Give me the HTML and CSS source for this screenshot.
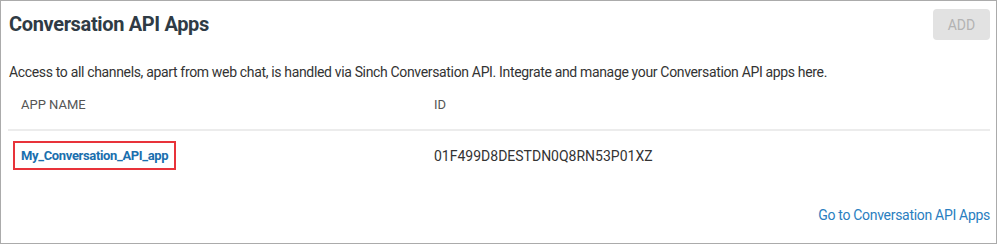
FILE: index.html
```html
<!DOCTYPE html>
<html lang="en">
<head>
    <meta charset="UTF-8">
    <title>Conversation API Apps</title>
    <link rel="stylesheet" href="styles.css">
</head>
<body>
    <div class="panel">
        <div class="panel-head">
            <h2>Conversation API Apps</h2>
            <button class="btn-add" disabled>ADD</button>
        </div>
        <p class="intro">Access to all channels, apart from web chat, is handled via Sinch Conversation API. Integrate and manage your Conversation API apps here.</p>
        <table class="apps">
            <thead>
                <tr>
                    <th class="col-name">APP NAME</th>
                    <th>ID</th>
                </tr>
            </thead>
            <tbody>
                <tr>
                    <td class="col-name"><a href="#" class="app-link">My_Conversation_API_app</a></td>
                    <td>01F499D8DESTDN0Q8RN53P01XZ</td>
                </tr>
            </tbody>
        </table>
        <div class="panel-foot">
            <a href="#">Go to Conversation API Apps</a>
        </div>
    </div>
</body>
</html>
```

FILE: styles.css
```css
body {
    margin: 0;
    font-family: Roboto, sans-serif;
    color: #333;
    background: #fff;
}
.panel {
    width: 995px;
    height: 242px;
    border: 1px solid #ababab;
}
.panel-head {
    display: flex;
    justify-content: space-between;
    align-items: flex-start;
    padding: 8px 6px 0 8px;
}
.panel-head h2 {
    margin: 3px 0 0;
    font-size: 20px;
    font-weight: 700;
    letter-spacing: -0.35px;
    color: #2f3b45;
}
.btn-add {
    width: 57px;
    height: 31px;
    border: none;
    border-radius: 4px;
    background: #e2e2e2;
    color: #b3b3b3;
    font-family: Roboto, sans-serif;
    font-size: 14px;
}
.intro {
    margin: 24px 0 0 8px;
    font-size: 14px;
    letter-spacing: -0.34px;
    color: #333;
}
.apps {
    width: 982px;
    margin: 6px 0 0 7px;
    border-collapse: collapse;
}
.apps th {
    text-align: left;
    font-weight: 400;
    font-size: 13px;
    color: #555;
    padding: 11px 0 17px;
    border-bottom: 2px solid #ececec;
}
.apps td {
    font-size: 14px;
    padding: 10px 0 9px;
}
.col-name {
    width: 413px;
    padding-left: 13px !important;
}
.app-link {
    display: inline-block;
    color: #1a6fae;
    font-weight: 700;
    font-size: 13px;
    letter-spacing: -0.35px;
    text-decoration: none;
    padding: 5px 6px;
    margin-left: -8px;
    border: 2px solid #e8333a;
}
.panel-foot {
    text-align: right;
    padding: 26px 6px 0 0;
}
.panel-foot a {
    color: #2a7ec0;
    font-size: 14px;
    letter-spacing: -0.3px;
    text-decoration: none;
}
```
